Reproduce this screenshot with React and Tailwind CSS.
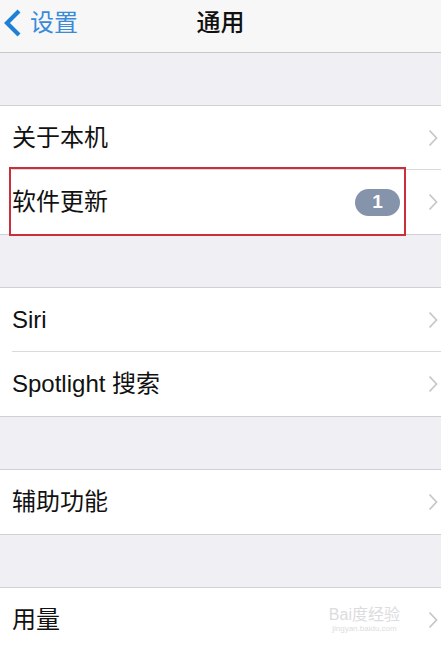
import React from 'react';

const font = { fontFamily: '"Liberation Sans", "Noto Sans CJK SC", sans-serif' };

const Chevron = () => (
  <svg width="10" height="18" viewBox="0 0 10 18" className="shrink-0">
    <path d="M1.5 1.5 L8.5 9 L1.5 16.5" fill="none" stroke="#c7c7cc" strokeWidth="1.8" />
  </svg>
);

const Row = ({ label, last, right, boxed }) => (
  <div className="relative h-16 bg-white">
    <div className={`flex h-full items-center pr-[3px] ${last ? '' : 'ml-3 border-b border-[#d9d9de]'}`}>
      <span className={`flex-1 text-[24px] text-[#111] ${last ? 'pl-3' : ''}`}>{label}</span>
      {right}
      <div className="ml-7">
        <Chevron />
      </div>
    </div>
    {boxed && (
      <div className="absolute left-[9px] top-[-3px] h-[69px] w-[397px] border-2 border-[#c9303a]"></div>
    )}
  </div>
);

const Group = ({ items }) => (
  <div className="border-y border-[#cfcfd4] bg-white">
    {items.map((it, i) => (
      <Row key={i} {...it} last={i === items.length - 1} />
    ))}
  </div>
);

const Gap = () => <div className="h-[52px]"></div>;

export default function App() {
  return (
    <div className="h-[647px] w-[441px] overflow-hidden bg-[#efeff4]" style={font}>
      <div className="relative flex h-[53px] items-center border-b border-[#c8c7cc] bg-[#f7f7f8] pb-[7px]">
        <div className="flex items-center pl-[3px] text-[#3a8ad8]">
          <svg width="19" height="28" viewBox="0 0 19 28">
            <path d="M16 2 L4 14 L16 26" fill="none" stroke="#1e7fd6" strokeWidth="4.2" />
          </svg>
          <span className="ml-[8px] text-[24px]">设置</span>
        </div>
        <div className="pointer-events-none absolute inset-x-0 text-center text-[24px] font-medium text-[#111]">
          通用
        </div>
      </div>
      <Gap />
      <Group
        items={[
          { label: '关于本机' },
          {
            label: '软件更新',
            boxed: true,
            right: (
              <div className="flex h-[27px] w-[45px] items-center justify-center rounded-full bg-[#8593ab] text-[19px] font-bold text-white">
                1
              </div>
            ),
          },
        ]}
      />
      <Gap />
      <Group items={[{ label: 'Siri' }, { label: 'Spotlight 搜索' }]} />
      <Gap />
      <Group items={[{ label: '辅助功能' }]} />
      <Gap />
      <Group
        items={[
          {
            label: '用量',
            right: (
              <div className="flex flex-col items-center text-[#dcdce0]">
                <span className="text-[16px] leading-[18px]">Bai度经验</span>
                <span className="text-[8px] leading-[10px]">jingyan.baidu.com</span>
              </div>
            ),
          },
        ]}
      />
    </div>
  );
}
